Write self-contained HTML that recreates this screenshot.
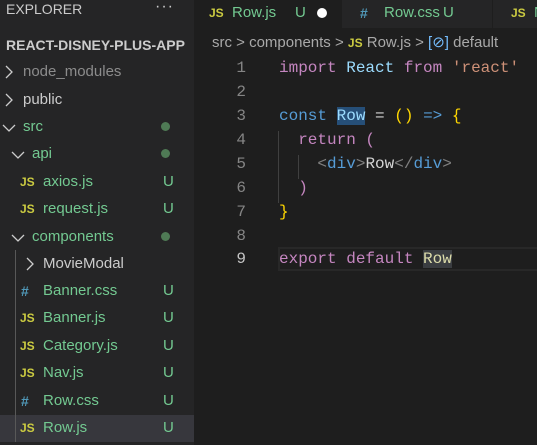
<!DOCTYPE html>
<html><head><style>
*{margin:0;padding:0;box-sizing:border-box}
body{width:537px;height:445px;overflow:hidden;background:#1e1e1e;font-family:"Liberation Sans",sans-serif;position:relative}
#side{position:absolute;left:0;top:0;width:194px;height:445px;background:#252526;color:#ccc}
.row{position:absolute;left:0;width:194px;height:26px;font-size:15px;line-height:26px;white-space:nowrap}
.chev{position:absolute;top:6px}
.dot{position:absolute;left:161px;top:8px;width:9px;height:9px;border-radius:50%;background:#4f7a55}
.U{position:absolute;left:163px;color:#73c991;font-size:15px}
.js{position:absolute;font-size:12px;font-weight:bold;color:#cbcb41}
.hash{position:absolute;font-size:14px;font-weight:bold;color:#519aba}
.g{color:#73c991}
#tabs{position:absolute;left:194px;top:0;width:343px;height:28px;background:#252526}
.tab{position:absolute;top:0;height:28px;font-size:15px;line-height:26px;color:#73c991}
#code{position:absolute;left:194px;top:0;font-family:"Liberation Mono",monospace;font-size:16px}
.ln{position:absolute;left:0;width:52px;text-align:right;color:#858585}
.cl{position:absolute;left:85px;white-space:pre;color:#d4d4d4}
.k{color:#c586c0}.b{color:#569cd6}.v{color:#9cdcfe}.s{color:#ce9178}.y{color:#ffd700}.t{color:#808080}
</style></head><body>
<div id="side">
<div class="row" style="top:-4px;left:6px;font-size:14px;color:#ccc">EXPLORER</div>
<div class="row" style="top:-6px;left:155px;font-size:16px;letter-spacing:1px">···</div>
<div class="row" style="top:32px;left:6px;font-size:14px;font-weight:bold;color:#ccc">REACT-DISNEY-PLUS-APP</div>
<div class="row" style="top:59px"><svg class="chev" style="left:4px" width="10" height="14"><path d="M2 1l6 6-6 6" fill="none" stroke="#ccc" stroke-width="1.3"/></svg><span style="position:absolute;left:23px;color:#8c8c8c">node_modules</span></div>
<div class="row" style="top:87px"><svg class="chev" style="left:4px" width="10" height="14"><path d="M2 1l6 6-6 6" fill="none" stroke="#ccc" stroke-width="1.3"/></svg><span style="position:absolute;left:23px">public</span></div>
<div class="row" style="top:114px"><svg class="chev" style="left:2px;top:9px" width="14" height="10"><path d="M1 2l6 6 6-6" fill="none" stroke="#ccc" stroke-width="1.3"/></svg><span class="g" style="position:absolute;left:23px">src</span><span class="dot"></span></div>
<div class="row" style="top:141px"><svg class="chev" style="left:11px;top:9px" width="14" height="10"><path d="M1 2l6 6 6-6" fill="none" stroke="#ccc" stroke-width="1.3"/></svg><span class="g" style="position:absolute;left:32px">api</span><span class="dot"></span></div>
<div class="row" style="top:169px"><span class="js" style="left:20px">JS</span><span class="g" style="position:absolute;left:43px">axios.js</span><span class="U">U</span></div>
<div class="row" style="top:196px"><span class="js" style="left:20px">JS</span><span class="g" style="position:absolute;left:43px">request.js</span><span class="U">U</span></div>
<div class="row" style="top:224px"><svg class="chev" style="left:11px;top:9px" width="14" height="10"><path d="M1 2l6 6 6-6" fill="none" stroke="#ccc" stroke-width="1.3"/></svg><span class="g" style="position:absolute;left:32px">components</span><span class="dot"></span></div>
<div class="row" style="top:251px"><svg class="chev" style="left:25px" width="10" height="14"><path d="M2 1l6 6-6 6" fill="none" stroke="#ccc" stroke-width="1.3"/></svg><span style="position:absolute;left:43px">MovieModal</span></div>
<div class="row" style="top:278px"><span class="hash" style="left:21px">#</span><span class="g" style="position:absolute;left:43px">Banner.css</span><span class="U">U</span></div>
<div class="row" style="top:305px"><span class="js" style="left:20px">JS</span><span class="g" style="position:absolute;left:43px">Banner.js</span><span class="U">U</span></div>
<div class="row" style="top:333px"><span class="js" style="left:20px">JS</span><span class="g" style="position:absolute;left:43px">Category.js</span><span class="U">U</span></div>
<div class="row" style="top:360px"><span class="js" style="left:20px">JS</span><span class="g" style="position:absolute;left:43px">Nav.js</span><span class="U">U</span></div>
<div class="row" style="top:388px"><span class="hash" style="left:21px">#</span><span class="g" style="position:absolute;left:43px">Row.css</span><span class="U">U</span></div>
<div class="row" style="top:415px;background:#37373d;height:27px"><span class="js" style="left:20px">JS</span><span class="g" style="position:absolute;left:43px">Row.js</span><span class="U">U</span></div>
<div style="position:absolute;left:15px;top:250px;width:1px;height:192px;background:#585858"></div>
</div>
<div id="tabs">
<div class="tab" style="left:0;width:148px;background:#1e1e1e"><span class="js" style="left:15px;top:0">JS</span><span style="position:absolute;left:38px">Row.js</span><span style="position:absolute;left:101px">U</span><span style="position:absolute;left:123px;top:8px;width:10px;height:10px;border-radius:50%;background:#fff"></span></div>
<div class="tab" style="left:148px;width:150px;border-left:1px solid #252526"><span class="hash" style="left:17px;top:0">#</span><span style="position:absolute;left:41px">Row.css</span><span style="position:absolute;left:100px">U</span></div>
<div class="tab" style="left:298px;width:50px;border-left:1px solid #1e1e1e"><span class="js" style="left:18px;top:0">JS</span><span style="position:absolute;left:41px">N</span></div>
</div>
<div style="position:absolute;left:212px;top:33px;font-size:15px;color:#a9a9a9;white-space:nowrap">src &gt; components &gt; <span style="color:#cbcb41;font-size:12px;font-weight:bold">JS</span> Row.js &gt; <span style="color:#75beff">[⊘]</span> default</div>
<div id="code">
<div class="ln" style="top:59px">1</div><div class="cl" style="top:59px"><span class="k">import</span> <span class="v">React</span> <span class="k">from</span> <span class="s">'react'</span></div>
<div class="ln" style="top:83px">2</div>
<div class="ln" style="top:107px">3</div><div class="cl" style="top:107px"><span class="b">const</span> <span class="v" style="background:#264f78">Row</span> = <span class="y">()</span> <span class="b">=&gt;</span> <span class="y">{</span></div>
<div class="ln" style="top:131px">4</div><div class="cl" style="top:131px">  <span class="k">return</span> <span class="k">(</span></div>
<div class="ln" style="top:155px">5</div><div class="cl" style="top:155px">    <span class="t">&lt;</span><span class="b">div</span><span class="t">&gt;</span>Row<span class="t">&lt;/</span><span class="b">div</span><span class="t">&gt;</span></div>
<div class="ln" style="top:179px">6</div><div class="cl" style="top:179px">  <span class="k">)</span></div>
<div class="ln" style="top:203px">7</div><div class="cl" style="top:203px"><span class="y">}</span></div>
<div class="ln" style="top:227px">8</div>
<div style="position:absolute;left:84px;top:247px;width:260px;height:24px;border:2px solid #282828;border-right:none"></div>
<div class="ln" style="top:250px;color:#c6c6c6">9</div><div class="cl" style="top:250px"><span class="k">export</span> <span class="k">default</span> <span class="v" style="background:#3a3d41;color:#dcdcaa">Row</span></div>
<div style="position:absolute;left:84px;top:131px;width:1px;height:72px;background:#404040"></div>
<div style="position:absolute;left:104px;top:155px;width:1px;height:24px;background:#404040"></div>
</div>
</body></html>
